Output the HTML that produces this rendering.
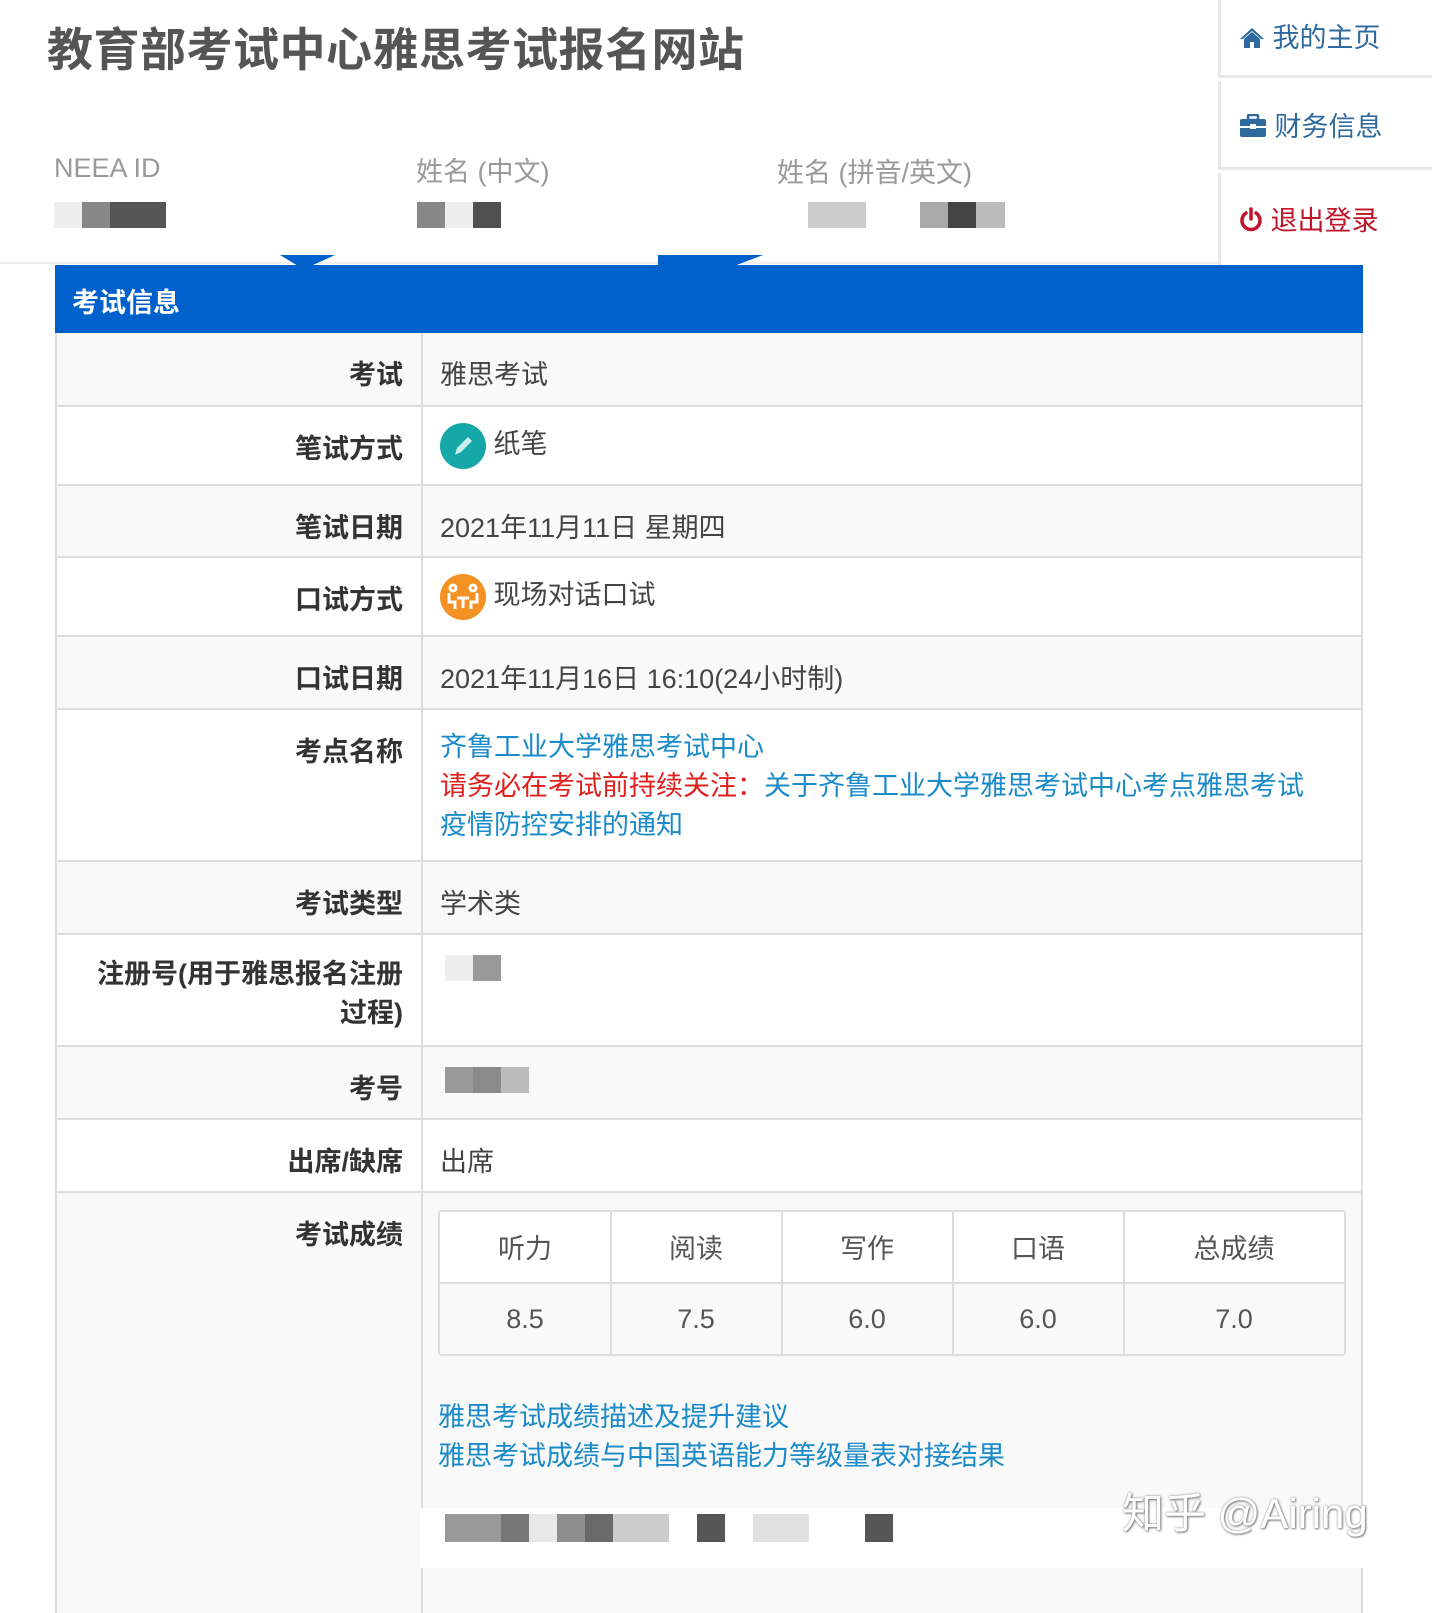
<!DOCTYPE html>
<html><head><meta charset="utf-8"><style>
*{margin:0;padding:0;box-sizing:border-box}
body{width:1432px;height:1592px;background:#fff;font-family:"Liberation Sans","Noto Sans CJK SC",sans-serif;position:relative;overflow:hidden;color:#444}
.a{position:absolute;white-space:nowrap}
.title{left:47px;top:14px;font-size:46px;font-weight:bold;color:#555;letter-spacing:0.5px}
.lab{font-size:27px;color:#999}
.blk{position:absolute;height:26px}
.nav{position:absolute;left:1218px;width:214px;border-left:3px solid #e8e8e8;font-size:27px;color:#2e6a9e}
.row{position:absolute;left:55px;width:1308px;border-bottom:2px solid #ddd;border-left:2px solid #ddd;border-right:2px solid #ddd}
.row .l{position:absolute;left:0;width:366px;top:0;bottom:0;border-right:2px solid #ddd;text-align:right;padding-right:18px;font-weight:bold;font-size:27px;color:#333}
.row .v{position:absolute;left:383px;font-size:27px;color:#444}
.g{background:#f9f9f9}
.w{background:#fff}
a{color:#1a8ac8;text-decoration:none}
</style></head><body>
<div class="a title">教育部考试中心雅思考试报名网站</div>
<div class="a lab" style="left:54px;top:153px">NEEA ID</div>
<div class="a lab" style="left:416px;top:150px">姓名 (中文)</div>
<div class="a lab" style="left:777px;top:151px">姓名 (拼音/英文)</div>
<div class="blk" style="left:54px;top:202px;width:28px;background:#eee"></div>
<div class="blk" style="left:82px;top:202px;width:28px;background:#888"></div>
<div class="blk" style="left:110px;top:202px;width:56px;background:#555"></div>
<div class="blk" style="left:417px;top:202px;width:28px;background:#888"></div>
<div class="blk" style="left:445px;top:202px;width:28px;background:#eee"></div>
<div class="blk" style="left:473px;top:202px;width:28px;background:#505050"></div>
<div class="blk" style="left:808px;top:202px;width:58px;background:#ccc"></div>
<div class="blk" style="left:920px;top:202px;width:28px;background:#aaa"></div>
<div class="blk" style="left:948px;top:202px;width:28px;background:#444"></div>
<div class="blk" style="left:976px;top:202px;width:29px;background:#bbb"></div>
<div class="a" style="left:0;top:262px;width:1218px;height:2px;background:#eee"></div>
<div class="nav" style="top:0;height:78px;border-bottom:3px solid #e8e8e8"><div class="a" style="left:18px;top:16px"><svg width="26" height="22" viewBox="0 0 26 22" style="vertical-align:-2px"><path d="M13 1 L1 12 L4 12 L13 4 L22 12 L25 12 Z" fill="#2e6a9e"/><path d="M5 12 L13 5 L21 12 V21 H15 V15 H11 V21 H5 Z" fill="#2e6a9e"/></svg> 我的主页</div></div>
<div class="nav" style="top:81px;height:89px;border-bottom:3px solid #e8e8e8"><div class="a" style="left:18px;top:24px"><svg width="28" height="24" viewBox="0 0 28 24" style="vertical-align:-2px"><rect x="9" y="1" width="10" height="5" rx="1" fill="none" stroke="#2e6a9e" stroke-width="2.5"/><rect x="1" y="5" width="26" height="18" rx="2" fill="#2e6a9e"/><rect x="1" y="12" width="26" height="2" fill="#fff"/><rect x="11" y="10" width="6" height="5" fill="#fff"/></svg> 财务信息</div></div>
<div class="nav" style="top:173px;height:92px;color:#c0142a"><div class="a" style="left:18px;top:26px"><svg width="24" height="26" viewBox="0 0 24 26" style="vertical-align:-3px"><path d="M7 6 A9 9 0 1 0 17 6" fill="none" stroke="#c0142a" stroke-width="3.5" stroke-linecap="round"/><path d="M12 2 V12" stroke="#c0142a" stroke-width="3.5" stroke-linecap="round"/></svg> 退出登录</div></div>
<div class="a" style="left:280px;top:255px;width:55px;height:10px;background:#0060cc;clip-path:polygon(0 0,100% 0,60% 100%,30% 100%)"></div>
<div class="a" style="left:658px;top:255px;width:105px;height:10px;background:#0060cc;clip-path:polygon(0 0,100% 0,75% 100%,0 100%)"></div>
<div class="a" style="left:55px;top:265px;width:1308px;height:68px;background:#0060cc;color:#fff;font-weight:bold;font-size:27px;padding:16px 0 0 17px">考试信息</div>

<div class="row g" style="top:333px;height:74px"><div class="l" style="padding-top:20px">考试</div><div class="v" style="top:20px">雅思考试</div></div>
<div class="row w" style="top:407px;height:79px"><div class="l" style="padding-top:20px">笔试方式</div><div class="v" style="top:15px"><svg width="46" height="46" viewBox="0 0 46 46" style="vertical-align:middle"><circle cx="23" cy="23" r="23" fill="#16a8a8"/><path d="M15 32 L17 25 L28 14 L32 18 L21 29 Z" fill="#c8eeee"/></svg> 纸笔</div></div>
<div class="row g" style="top:486px;height:72px"><div class="l" style="padding-top:20px">笔试日期</div><div class="v" style="top:20px">2021年11月11日 星期四</div></div>
<div class="row w" style="top:558px;height:79px"><div class="l" style="padding-top:20px">口试方式</div><div class="v" style="top:15px"><svg width="46" height="46" viewBox="0 0 46 46" style="vertical-align:middle"><circle cx="23" cy="23" r="23" fill="#f39222"/><g fill="none" stroke="#fff" stroke-width="3"><circle cx="13" cy="14" r="3"/><circle cx="33" cy="14" r="3"/><path d="M9 19 V28 H15 V35"/><path d="M37 19 V28 H31 V35"/><path d="M17 24 H29 M23 24 V34"/></g></svg> 现场对话口试</div></div>
<div class="row g" style="top:637px;height:73px"><div class="l" style="padding-top:20px">口试日期</div><div class="v" style="top:20px">2021年11月16日 16:10(24小时制)</div></div>
<div class="row w" style="top:710px;height:152px"><div class="l" style="padding-top:20px">考点名称</div><div class="v" style="top:18px;line-height:39px"><a>齐鲁工业大学雅思考试中心</a><br><span style="color:#e0201c">请务必在考试前持续关注：</span><a>关于齐鲁工业大学雅思考试中心考点雅思考试</a><br><a>疫情防控安排的通知</a></div></div>
<div class="row g" style="top:862px;height:73px"><div class="l" style="padding-top:20px">考试类型</div><div class="v" style="top:20px">学术类</div></div>
<div class="row w" style="top:935px;height:112px"><div class="l" style="padding-top:20px;line-height:39px">注册号(用于雅思报名注册<br>过程)</div></div>
<div class="blk" style="left:445px;top:955px;width:28px;background:#eee"></div>
<div class="blk" style="left:473px;top:955px;width:28px;background:#999"></div>
<div class="row g" style="top:1047px;height:73px"><div class="l" style="padding-top:20px">考号</div></div>
<div class="blk" style="left:445px;top:1067px;width:28px;background:#999"></div>
<div class="blk" style="left:473px;top:1067px;width:28px;background:#8a8a8a"></div>
<div class="blk" style="left:501px;top:1067px;width:28px;background:#bbb"></div>
<div class="row w" style="top:1120px;height:73px"><div class="l" style="padding-top:20px">出席/缺席</div><div class="v" style="top:20px">出席</div></div>
<div class="row g" style="top:1193px;height:420px;border-bottom:none"><div class="l" style="padding-top:20px">考试成绩</div></div>

<div class="a" style="left:438px;top:1210px;width:908px;height:146px;border:2px solid #ddd;border-radius:4px;font-size:27px;color:#555;background:#fff">
<div class="a" style="left:0;top:0;width:904px;height:72px;background:#fff;border-bottom:2px solid #ddd"></div>
<div class="a" style="left:0;top:72px;width:904px;height:70px;background:#f9f9f9"></div>
<div class="a" style="left:170px;top:0;width:2px;height:142px;background:#ddd"></div>
<div class="a" style="left:341px;top:0;width:2px;height:142px;background:#ddd"></div>
<div class="a" style="left:512px;top:0;width:2px;height:142px;background:#ddd"></div>
<div class="a" style="left:683px;top:0;width:2px;height:142px;background:#ddd"></div>
<div class="a" style="left:0;top:15px;width:170px;text-align:center">听力</div>
<div class="a" style="left:171px;top:15px;width:170px;text-align:center">阅读</div>
<div class="a" style="left:342px;top:15px;width:170px;text-align:center">写作</div>
<div class="a" style="left:513px;top:15px;width:170px;text-align:center">口语</div>
<div class="a" style="left:684px;top:15px;width:220px;text-align:center">总成绩</div>
<div class="a" style="left:0;top:92px;width:170px;text-align:center">8.5</div>
<div class="a" style="left:171px;top:92px;width:170px;text-align:center">7.5</div>
<div class="a" style="left:342px;top:92px;width:170px;text-align:center">6.0</div>
<div class="a" style="left:513px;top:92px;width:170px;text-align:center">6.0</div>
<div class="a" style="left:684px;top:92px;width:220px;text-align:center">7.0</div>
</div>
<div class="a" style="left:438px;top:1398px;font-size:27px;line-height:39px"><a>雅思考试成绩描述及提升建议</a><br><a>雅思考试成绩与中国英语能力等级量表对接结果</a></div>
<div class="blk" style="left:420px;top:1508px;width:1000px;height:60px;background:#fff"></div>
<div class="blk" style="left:445px;top:1514px;width:56px;background:#999;height:28px"></div>
<div class="blk" style="left:501px;top:1514px;width:28px;background:#777;height:28px"></div>
<div class="blk" style="left:529px;top:1514px;width:28px;background:#e8e8e8;height:28px"></div>
<div class="blk" style="left:557px;top:1514px;width:28px;background:#8e8e8e;height:28px"></div>
<div class="blk" style="left:585px;top:1514px;width:28px;background:#6a6a6a;height:28px"></div>
<div class="blk" style="left:613px;top:1514px;width:56px;background:#ccc;height:28px"></div>
<div class="blk" style="left:697px;top:1514px;width:28px;background:#555;height:28px"></div>
<div class="blk" style="left:753px;top:1514px;width:56px;background:#e0e0e0;height:28px"></div>
<div class="blk" style="left:865px;top:1514px;width:28px;background:#555;height:28px"></div>
<div class="a" style="left:1122px;top:1480px;font-size:42px;color:#fff;text-shadow:0 0 2px #888,1px 1px 2px #777">知乎 @Airing</div>
</body></html>
